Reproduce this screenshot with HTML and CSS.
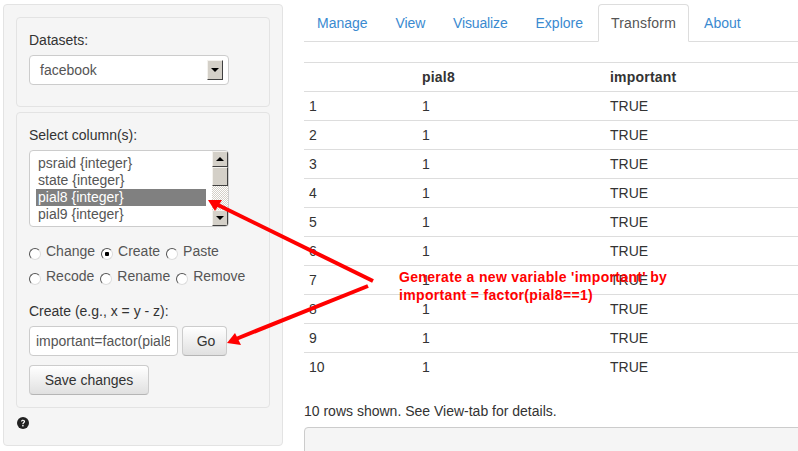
FILE: index.html
```html
<!DOCTYPE html>
<html lang="en">
<head>
    <meta charset="UTF-8">
    <title>Transform</title>
    <link rel="stylesheet" href="styles.css">
</head>
<body>
    <div class="page">
        <aside class="sidebar">
            <div class="well dataset-well">
                <label class="field-label">Datasets:</label>
                <div class="select">
                    <span>facebook</span>
                    <span class="drop-btn"><i class="tri-down"></i></span>
                </div>
            </div>

            <div class="well column-well">
                <label class="field-label">Select column(s):</label>
                <div class="listbox">
                    <div class="options">
                        <div class="option">psraid {integer}</div>
                        <div class="option">state {integer}</div>
                        <div class="option selected">pial8 {integer}</div>
                        <div class="option">pial9 {integer}</div>
                    </div>
                    <div class="scrollbar">
                        <span class="scroll-btn"><i class="tri-up"></i></span>
                        <span class="scroll-thumb"></span>
                        <span class="scroll-track"></span>
                        <span class="scroll-btn"><i class="tri-down"></i></span>
                    </div>
                </div>

                <div class="radios">
                    <label class="radio"><input type="radio" name="tr">Change</label>
                    <label class="radio"><input type="radio" name="tr" checked>Create</label>
                    <label class="radio"><input type="radio" name="tr">Paste</label>
                </div>
                <div class="radios">
                    <label class="radio"><input type="radio" name="tr">Recode</label>
                    <label class="radio"><input type="radio" name="tr">Rename</label>
                    <label class="radio"><input type="radio" name="tr">Remove</label>
                </div>

                <label class="field-label create-label">Create (e.g., x = y - z):</label>
                <div class="create-row">
                    <input class="text-input" type="text" value="important=factor(pial8==1)">
                    <button class="btn go-btn">Go</button>
                </div>
                <button class="btn save-btn">Save changes</button>
            </div>

            <svg class="help-icon" width="12" height="12" viewBox="0 0 12 12">
                <circle cx="6" cy="6" r="6" fill="#222"/>
                <path d="M3.9 4.6C4 3.4 4.9 2.8 6 2.8c1.2 0 2.1.7 2.1 1.7 0 1.5-1.6 1.4-1.6 2.700H5.300c0-1.800 1.500-1.800 1.500-2.700 0-.4-.3-.7-.8-.7-.5 0-.8.3-.9.8z" fill="#fff"/>
                <rect x="5.200" y="8" width="1.400" height="1.400" fill="#fff"/>
            </svg>
        </aside>

        <main class="main">
            <ul class="tabs">
                <li><a href="#">Manage</a></li>
                <li class="tight"><a href="#">View</a></li>
                <li class="tight"><a href="#">Visualize</a></li>
                <li><a href="#">Explore</a></li>
                <li class="active"><a href="#">Transform</a></li>
                <li><a href="#">About</a></li>
            </ul>

            <table class="data-table">
                <thead>
                    <tr><th></th><th>pial8</th><th>important</th></tr>
                </thead>
                <tbody>
                    <tr><td>1</td><td>1</td><td>TRUE</td></tr>
                    <tr><td>2</td><td>1</td><td>TRUE</td></tr>
                    <tr><td>3</td><td>1</td><td>TRUE</td></tr>
                    <tr><td>4</td><td>1</td><td>TRUE</td></tr>
                    <tr><td>5</td><td>1</td><td>TRUE</td></tr>
                    <tr><td>6</td><td>1</td><td>TRUE</td></tr>
                    <tr><td>7</td><td>1</td><td>TRUE</td></tr>
                    <tr><td>8</td><td>1</td><td>TRUE</td></tr>
                    <tr><td>9</td><td>1</td><td>TRUE</td></tr>
                    <tr><td>10</td><td>1</td><td>TRUE</td></tr>
                </tbody>
            </table>

            <p class="rows-note">10 rows shown. See View-tab for details.</p>
            <div class="output-well"></div>
        </main>

        <!-- annotation drawn over the screenshot -->
        <svg class="arrows" width="798" height="451" viewBox="0 0 798 451">
            <path d="M373 281 L216 204" stroke="#f00" stroke-width="4" fill="none"/>
            <path d="M208 200 L222 200 L215 211 Z" fill="#f00"/>
            <path d="M368 286 L236 339" stroke="#f00" stroke-width="4" fill="none"/>
            <path d="M227 343 L235 333 L241 345 Z" fill="#f00"/>
        </svg>
        <div class="note">Generate a new variable 'important' by<br>important = factor(pial8==1)</div>
    </div>
</body>
</html>
```

FILE: styles.css
```css
* {
    box-sizing: border-box;
}

html, body {
    margin: 0;
    padding: 0;
}

body {
    font-family: "Liberation Sans", Arial, sans-serif;
    font-size: 14px;
    line-height: 20px;
    color: #333;
    background: #fff;
}

.page {
    position: relative;
    width: 798px;
    height: 451px;
    overflow: hidden;
    display: flex;
    align-items: flex-start;
    padding: 4px 0 0 3px;
}

/* sidebar */
.sidebar {
    flex: none;
    width: 280px;
    height: 442px;
    padding: 12px;
    background: #f5f5f5;
    border: 1px solid #e3e3e3;
    border-radius: 4px;
}

.well {
    width: 254px;
    padding: 12px;
    background: #f5f5f5;
    border: 1px solid #e3e3e3;
    border-radius: 4px;
}

.dataset-well {
    height: 90px;
    margin-bottom: 5px;
}

.column-well {
    height: 296px;
}

.field-label {
    display: block;
    margin-bottom: 5px;
}

.select {
    display: flex;
    align-items: center;
    justify-content: space-between;
    width: 200px;
    height: 30px;
    padding: 0 5px 0 10px;
    background: #fff;
    border: 1px solid #ccc;
    border-radius: 4px;
    color: #555;
}

.drop-btn,
.scroll-btn {
    display: flex;
    align-items: center;
    justify-content: center;
    background: #d4d0c8;
    border: 1px solid;
    border-color: #f4f2ee #404040 #404040 #f4f2ee;
}

.drop-btn {
    width: 16px;
    height: 20px;
}

.tri-down,
.tri-up {
    width: 0;
    height: 0;
    border-left: 4px solid transparent;
    border-right: 4px solid transparent;
}

.tri-down {
    border-top: 4px solid #000;
}

.tri-up {
    border-bottom: 4px solid #000;
}

.listbox {
    display: flex;
    width: 200px;
    height: 77px;
    background: #fff;
    border: 1px solid #ccc;
    border-radius: 4px;
    overflow: hidden;
}

.options {
    flex: 1;
    padding: 4px 0 0 6px;
}

.option {
    width: 170px;
    height: 17px;
    padding-left: 2px;
    line-height: 17px;
    color: #555;
}

.option.selected {
    background: #808080;
    color: #fff;
}

.scrollbar {
    flex: none;
    display: flex;
    flex-direction: column;
    width: 16px;
}

.scroll-btn {
    height: 16px;
}

.scroll-thumb {
    height: 19px;
    background: #d4d0c8;
    border: 1px solid;
    border-color: #f4f2ee #404040 #404040 #f4f2ee;
}

.scroll-track {
    flex: 1;
    background: repeating-conic-gradient(#d4d0c8 0 25%, #fff 0 50%) 0 0 / 2px 2px;
}

.radios {
    display: flex;
    gap: 6px;
    height: 25px;
    align-items: center;
    color: #555;
}

.listbox + .radios {
    margin-top: 11px;
}

.radio {
    display: flex;
    align-items: center;
    gap: 5px;
}

.radio input {
    appearance: none;
    width: 12px;
    height: 12px;
    margin: 6px 0 0 0;
    background: #fff;
    border: 1px solid;
    border-color: #555 #ddd #ddd #555;
    border-radius: 50%;
}

.radio input:checked {
    background: radial-gradient(circle, #000 0 2px, #fff 2.5px);
}

.create-label {
    margin-top: 13px;
}

.create-row {
    display: flex;
    gap: 4px;
    margin-bottom: 9px;
}

.text-input {
    width: 149px;
    height: 30px;
    padding: 0 7px 0 6px;
    font: inherit;
    color: #555;
    background: #fff;
    border: 1px solid #ccc;
    border-radius: 4px;
}

.btn {
    height: 30px;
    font: inherit;
    color: #333;
    background: linear-gradient(#fff, #e0e0e0);
    border: 1px solid #ccc;
    border-bottom-color: #b5b5b5;
    border-radius: 4px;
    padding: 0;
}

.go-btn {
    width: 45px;
    padding-left: 3px;
}

.save-btn {
    display: block;
    width: 120px;
}

.help-icon {
    display: block;
    margin: 9px 0 0 1px;
}

/* main panel */
.main {
    flex: none;
    width: 494px;
    margin-left: 21px;
}

.tabs {
    display: flex;
    height: 38px;
    margin: 0;
    padding: 0;
    list-style: none;
    border-bottom: 1px solid #ddd;
}

.tabs li {
    margin-right: 2px;
}

.tabs a {
    display: block;
    height: 38px;
    padding: 8px 12px;
    border: 1px solid transparent;
    border-radius: 4px 4px 0 0;
    color: #3a8ad0;
    text-decoration: none;
}

.tabs .tight a {
    letter-spacing: -0.15px;
}

.tabs .active a {
    color: #555;
    background: #fff;
    border-color: #ddd #ddd #fff;
    letter-spacing: 0.2px;
}

.data-table {
    width: 100%;
    margin-top: 20px;
    border-collapse: collapse;
    table-layout: fixed;
}

.data-table th,
.data-table td {
    height: 29px;
    padding: 4px 5px;
    text-align: left;
    border-top: 1px solid #ddd;
}

.data-table th {
    letter-spacing: 0.2px;
}

.data-table th:nth-child(1) {
    width: 113px;
}

.data-table th:nth-child(2) {
    width: 188px;
}

.rows-note {
    margin: 19px 0 6px;
}

.output-well {
    width: 520px;
    height: 60px;
    background: #f5f5f5;
    border: 1px solid #ccc;
    border-radius: 4px;
}

/* annotation */
.arrows {
    position: absolute;
    left: 0;
    top: 0;
}

.note {
    position: absolute;
    left: 399px;
    top: 268px;
    font-weight: bold;
    line-height: 18px;
    letter-spacing: 0.33px;
    color: #f00;
    white-space: nowrap;
}
```
